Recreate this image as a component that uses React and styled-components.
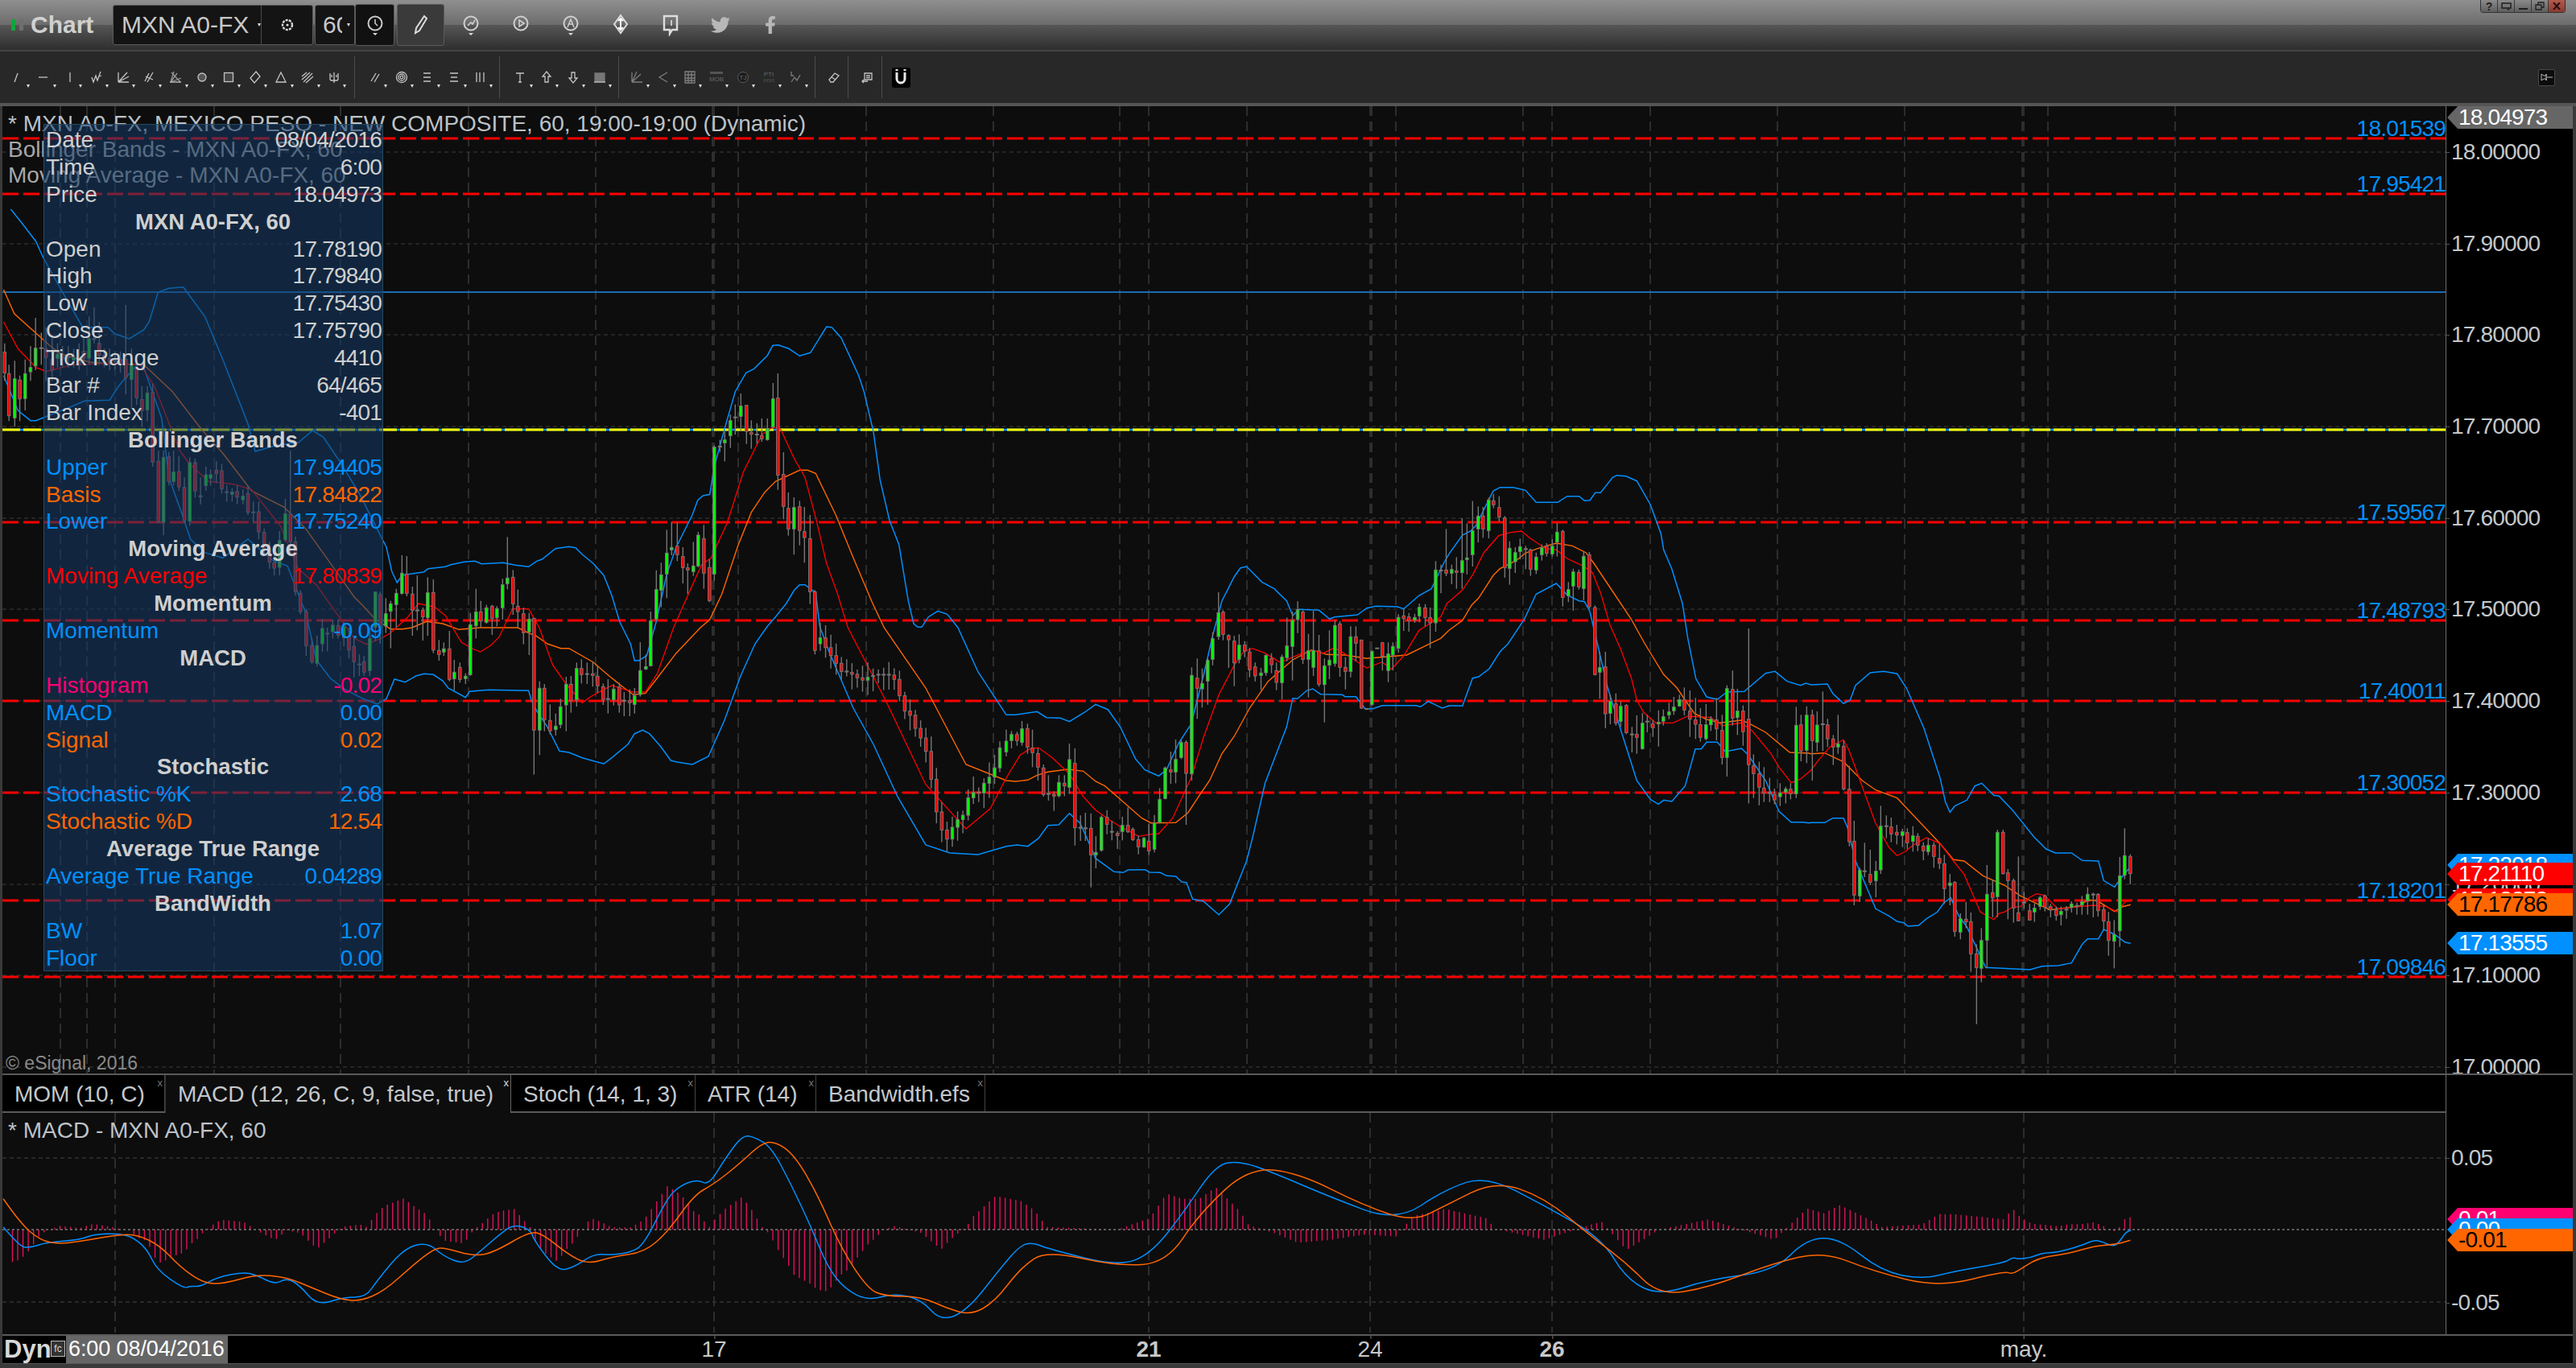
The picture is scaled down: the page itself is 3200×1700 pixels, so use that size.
import React from 'react';
import styled, { createGlobalStyle } from 'styled-components';
import { FaTwitter, FaFacebookF } from 'react-icons/fa';

const Global = createGlobalStyle`
  html, body { margin: 0; padding: 0; background: #3a3a3a; }
  body { width: 3200px; height: 1700px; overflow: hidden; font-family: "Liberation Sans", Arial, sans-serif; }
`;

/* ---------- coordinate helpers: transcribed points use crop coordinates ---------- */
const Z2 = [0, 260, 2.24, 3], Z3 = [0, 760, 2.24, 3], Z12 = [440, 640, 3, 3], Z8 = [800, 380, 3, 3],
  Z9 = [1250, 640, 2.613, 3], Z10 = [1800, 580, 3, 3], Z11 = [2250, 760, 3, 3], Z6 = [0, 1300, 1.206, 3],
  Z7 = [2500, 1300, 2.24, 3], ZO = [0, 0, 0.49, 0.49], ID = [0, 0, 1, 1];
const pts = ([ox, oy, sx, sy], a) => {
  const r = [];
  for (let i = 0; i < a.length; i += 2) r.push([ox + a[i] / sx, oy + a[i + 1] / sy]);
  return r;
};
const toPath = (p) => 'M' + p.map(([x, y]) => `${x.toFixed(1)} ${y.toFixed(1)}`).join('L');
const toSmooth = (p) => {
  let s = `M${p[0][0].toFixed(1)} ${p[0][1].toFixed(1)}`;
  for (let i = 1; i < p.length - 1; i++) {
    const mx = (p[i][0] + p[i + 1][0]) / 2, my = (p[i][1] + p[i + 1][1]) / 2;
    s += `Q${p[i][0].toFixed(1)} ${p[i][1].toFixed(1)} ${mx.toFixed(1)} ${my.toFixed(1)}`;
  }
  const l = p[p.length - 1];
  return `${s}L${l[0].toFixed(1)} ${l[1].toFixed(1)}`;
};
const interp = (p, x) => {
  if (x <= p[0][0]) return p[0][1];
  for (let i = 1; i < p.length; i++) {
    if (x <= p[i][0]) {
      const t = (x - p[i - 1][0]) / (p[i][0] - p[i - 1][0] || 1);
      return p[i - 1][1] + t * (p[i][1] - p[i - 1][1]);
    }
  }
  return p[p.length - 1][1];
};

/* ---------- indicator curves ---------- */
const upper = [
  ...pts(Z2, [30,0,60,50,100,120,120,180,170,300,230,440,300,440,320,465,360,483,400,450,415,420,440,310,470,295,510,290,570,400,620,560,690,800,710,903,770,880,830,870,870,825,900,850,950,950,1000,1060,1060,1220]),
  ...pts(Z12, [120,120,140,210,160,252,178,225,220,218,260,212,275,200,340,193,360,185,410,175,450,172,475,182,555,178,600,187,650,193,680,172,700,165,750,125,800,118,825,122,850,147,890,180,930,225,960,300,990,400,1030,480,1045,543,1060,543,1090,525,1125,400,1165,220]),
  ...pts(Z8, [120,900,180,780,200,725,220,708,245,703,262,600,300,460,340,320,380,250,410,235,460,185,480,148,500,146,540,160,580,187,620,175,680,78,700,80,735,120,800,260,820,320,855,470,880,650,915,800,950,890,985,1100,1005,1185,1020,1198,1035,1198,1060,1160,1095,1138,1130,1150,1170,1200]),
  ...pts(ID, [1215,835]),
  ...pts(Z9, [0,745,30,745,100,733,130,755,175,757,205,770,255,735,290,706,330,725,370,790,420,910,450,950,495,973,520,950,560,850,600,780,640,600,670,450,700,320,740,230,760,197,780,192,830,250,870,275,910,320,930,375,950,352,1015,355,1050,388,1065,380,1140,372,1170,347,1200,340,1270,342,1290,350,1340,300,1380,275,1420,180]),
  ...pts(Z10, [0,325,50,255,80,240,100,220,165,90,190,77,240,77,285,88,325,133,405,133,440,110,485,110,505,127,525,125,545,97,565,97,610,40,625,32,660,35,700,53,750,140,790,250,800,310,830,380,870,510,890,640,920,790,960,858,1000,868,1035,840,1100,838,1180,770,1215,763,1260,800,1310,815,1330,807]),
  ...pts(Z11, [0,273,60,270,80,305,120,343,145,330,165,275,220,228,270,223,320,232,355,285,420,435,480,620,500,710,517,748,535,725,580,703,610,650,635,640,680,685,700,688,750,740,830,840,875,885,910,900,970,900,1010,928,1070,930,1090,1003,1130,1027,1150,1000,1190,950]),
];
const lower = [
  ...pts(Z2, [10,620,50,750,85,788,100,788,125,775,200,735,235,715,305,712,330,660,345,635,385,575,400,590,450,780,470,1000,510,1150,530,1230,570,1280,620,1300,690,1230,760,1310,800,1330,840,1470]),
  ...pts(Z3, [850,0,880,180,920,250,960,290,1010,325,1050,345]),
  ...pts(Z12, [120,685,150,612,190,623,230,600,260,592,295,595,330,618,350,645,415,680,430,658,500,652,650,655,660,690,680,730,720,790,765,880,800,885,850,905,930,928,960,905,1020,855,1045,815,1075,802,1100,815,1140,860,1180,915,1200,920]),
  ...pts(ID, [860,950,880,940,900,895,920,840,938,800]),
  ...pts(Z8, [460,1195,490,1160,530,1110,560,1060,580,1040,600,1040,640,1070,655,1195]),
  ...pts(ID, [1030,810,1060,880,1085,925,1115,990,1150,1050,1180,1060,1215,1062]),
  ...pts(Z9, [0,1235,35,1230,70,1235,105,1205,135,1157,170,1155,205,1112,240,1150,260,1200,290,1280,350,1330,380,1333,395,1323,450,1322,465,1332,500,1333,520,1345,550,1347,570,1368,585,1370,605,1432,640,1440,690,1490,725,1450,780,1290,800,1200,840,1000,880,880,910,790,930,683,945,685,975,655,995,648,1020,668,1090,670,1100,677,1135,677,1165,722,1190,722,1220,710,1330,710,1345,715,1370,695,1415,720,1440,710]),
  ...pts(Z10, [0,890,50,892,88,788,110,783,150,753,190,690,220,660,280,570,325,475,400,435,440,478,485,500,505,503,525,540,560,690,590,820,640,980,700,1170,750,1240,780,1258,800,1243,830,1248,880,1190,918,1052,940,1052,960,1027,1000,1027,1030,1062,1090,1050,1115,1075,1180,1170,1230,1285,1275,1325,1320,1325,1340,1328]),
  ...pts(Z11, [0,787,50,787,80,770,120,770,135,805,165,930,240,1108,290,1135,320,1155,345,1160,360,1173,400,1170,430,1145,470,1120,495,1085,520,1067,550,1135,580,1175,650,1327,815,1335,860,1322,920,1320,970,1310,1010,1240,1030,1220,1070,1220,1090,1185,1130,1203,1170,1233,1190,1237]),
];
const basis = [
  ...pts(Z2, [10,300,40,390,90,450,140,510,170,540,250,570,300,575,400,580,480,680,560,820,620,910,700,1050,790,1110,850,1190,930,1340]),
  ...pts(Z12, [0,305,30,335,75,385,135,425,180,425,215,420,270,397,330,405,390,427,470,420,610,420,650,440,680,452,720,480,770,497,800,497,890,548,950,600,1000,640,1040,670,1085,665,1120,620,1200,515]),
  ...pts(Z8, [210,1200,245,1170,290,1075,350,895,400,770,450,695,490,655,580,613,610,613,640,625,715,780,780,940,850,1105,895,1200]),
  ...pts(ID, [1150,855,1200,950]),
  ...pts(Z9, [0,990,30,993,70,988,100,970,135,958,200,948,250,955,290,993,320,1010,370,1060,440,1130,470,1148,550,1147,590,1110,630,1040,660,990,700,890,740,825,790,720,850,620,890,580,930,540,990,503,1040,520,1100,522,1170,535,1300,522,1410,460]),
  ...pts(Z10, [0,610,50,573,85,515,110,490,165,405,190,380,250,350,285,322,330,305,400,285,460,295,510,320,540,360,620,480,680,570,730,660,800,775,850,825,880,870,915,920,960,942,1010,955,1090,945,1115,955,1180,990,1270,1065,1340,1068]),
  ...pts(Z11, [0,530,50,527,120,560,190,630,240,665,320,695,400,780,480,865,530,925,570,930,640,985,720,1020,780,1060,890,1112,1000,1098,1030,1075,1065,1078,1130,1118,1160,1100,1190,1093]),
];
const movAvg = [
  ...pts(Z2, [10,420,50,520,100,590,130,605,200,580,300,575,390,580,430,660,500,900,525,945,580,1015,650,1025,700,1045,780,1180,830,1340,880,1400]),
  ...pts(Z12, [0,460,45,482,100,460,135,440,200,380,240,330,300,343,340,375,400,475,440,498,470,510,510,485,540,455,590,350,650,350,690,420,740,560,790,630,850,700,880,678,960,635,1040,660,1085,660,1130,590]),
  ...pts(Z8, [110,1200,190,1020,215,965,250,940,310,810,370,620,420,520,440,480,480,452,510,462,560,570,600,640,640,790,680,960,720,1070,760,1200]),
  ...pts(ID, [1100,870,1150,975,1200,1030,1230,1005]),
  ...pts(Z9, [0,980,45,895,80,870,105,868,150,905,205,965,250,1050,290,1100,340,1140,375,1165,430,1198,470,1190,495,1188,540,1130,600,980,640,830,690,670,740,560,770,510,800,498,840,515,890,550,950,520,995,505,1030,515,1065,495,1110,525,1170,570,1220,548,1250,575,1290,525,1340,430,1410,380,1430,330]),
  ...pts(Z10, [0,503,50,460,90,400,130,320,185,257,230,245,270,240,300,265,360,305,400,310,440,342,500,370,535,395,565,470,600,590,640,680,680,790,700,870,725,915,770,955,835,955,890,930,975,935,1020,965,1090,955,1130,985,1200,1070,1230,1120,1275,1178,1310,1165]),
  ...pts(Z11, [0,590,30,550,70,505,120,478,140,515,200,680,240,790,290,880,320,910,350,895,380,870,430,843,480,865,530,930,570,980,600,1050,630,1120,680,1148,700,1125,720,1120,750,1102,780,1100,810,1068,840,1052,870,1058,900,1090,920,1108,1000,1100,1050,1095,1100,1100,1140,1120,1170,1082,1190,1078]),
];
const macdLine = [
  ...pts(Z6, [5,680,30,755,45,757,70,738,120,728,140,708,170,705,195,712,220,760,235,840,275,910,285,900,300,903,325,868,365,848,385,860,412,895,430,870,450,900,475,973,515,942,548,942,565,880,605,760,640,737,665,790,695,820,720,770,750,705,770,670,795,690,800,730,835,845,860,830,890,780,915,785,945,775,965,745,1000,570,1020,525,1045,503,1062,525,1085,430,1112,338,1130,345,1155,380,1185,520,1215,680,1240,830,1265,910,1300,955,1340,928,1380,950,1410,1033,1450,990,1500,830,1530,745,1550,740,1568,760]),
  ...pts(ZO, [680,772,700,765,720,740,740,710,755,708,775,715,810,730,850,745,880,725,905,717,940,735,975,755,990,780,1010,790,1040,780,1080,775,1100,755,1120,755,1145,775,1170,780,1190,775,1220,770]),
  ...pts(Z7, [0,793,15,800,50,795,80,778,125,775,190,750,225,730,245,733,280,753,295,740,315,700,330,692]),
];
const signalLine = [
  ...pts(Z6, [5,575,30,665,60,730,90,745,140,725,175,710,205,708,240,750,270,830,305,890,335,892,385,857,430,868,470,910,510,950,540,957,575,920,620,820,650,762,665,757,710,790,740,775,795,695,815,710,850,780,880,820,920,790,965,775,1000,700,1040,560,1070,520,1110,440,1140,370,1160,360,1190,410,1225,560,1260,760,1300,910,1325,938,1380,940,1420,985,1455,1008,1490,960,1530,830,1568,768]),
  ...pts(ZO, [680,772,710,770,730,740,760,712,790,715,830,735,860,745,880,735,910,720,940,730,970,755,990,770,1010,790,1040,785,1080,770,1110,763,1140,775,1180,785,1220,775]),
  ...pts(Z7, [0,857,30,830,75,795,160,778,230,750,290,745,328,730]),
];

/* ---------- candles: [x, bodyTop, bodyBottom, wickTop, wickBottom, kind] ---------- */
const cs = ([ox, oy, sx, sy], list) => list.map(([x, t, b, wt, wb, k]) => ({
  x: ox + x / sx, t: oy + t / sy, b: oy + b / sy, wt: oy + wt / sy, wb: oy + wb / sy, k,
}));
const g = 'g', r = 'r', d = 'd';
const seg2 = [[13,533,610,500,640,r],[25,613,770,580,790,r],[41,632,778,565,810,g],[55,637,707,620,790,r],[70,613,706,560,750,g],[85,590,606,510,640,g],[99,518,584,405,600,g],[115,518,518,460,580,d],[128,520,553,440,640,r],[145,560,600,470,640,r],[160,540,556,500,590,g],[174,550,558,510,590,r],[190,553,568,510,590,d],[205,553,563,520,590,g],[220,555,580,500,600,r],[233,530,555,480,580,r],[248,483,555,400,580,g],[262,484,484,365,500,d],[276,500,545,420,580,r],[290,545,560,520,590,r],[305,555,570,520,600,r],[320,565,565,530,600,d],[335,560,570,530,610,r],[350,560,628,357,690,r],[366,575,635,520,740,g],[380,590,703,560,730,r],[395,710,750,660,810,r],[410,685,748,660,790,g],[425,683,943,650,960,r],[441,940,1165,900,1170,r],[455,926,1167,900,1215,g],[470,923,1015,905,1030,r],[483,980,1015,900,1030,g],[498,978,1035,920,1050,r],[513,1037,1160,1000,1170,r],[528,945,1163,925,1180,g],[543,945,1050,930,1075,r],[558,1070,1070,1000,1100,d],[573,990,1030,960,1050,g],[586,990,1003,970,1030,g],[602,973,985,940,1020,r],[617,975,1042,950,1060,r],[631,1055,1055,1030,1090,d],[646,1055,1063,1040,1090,g],[660,1052,1073,1030,1100,r],[676,1070,1083,1045,1100,g],[690,1060,1130,1030,1140,r],[705,1130,1130,1090,1170,d],[720,1128,1203,1090,1230,r],[735,1205,1265,1190,1290,r],[750,1265,1315,1240,1340,r],[763,1318,1338,1290,1365,r],[778,1235,1335,1200,1365,g],[794,1135,1232,1080,1240,g],[808,1137,1240,900,1280,r],[822,1240,1425,1220,1440,r],[836,1432,1500,1420,1510,r]];
const seg3 = [[852,0,127,-10,165,r],[868,127,187,100,195,r],[882,127,193,90,205,g],[897,63,120,28,150,g],[911,82,82,60,148,d],[926,51,75,30,100,g],[941,52,88,30,100,r],[957,55,98,40,130,g],[971,92,143,60,175,r],[985,130,187,90,245,r],[1000,197,197,160,240,d],[1013,187,226,165,240,r],[1029,100,220,60,240,g]];
const seg12 = [[79,287,418,285,470,g],[97,296,420,285,480,r],[118,368,414,310,440,g],[136,331,359,320,497,g],[157,292,334,275,420,g],[178,217,292,150,297,g],[196,220,292,153,303,r],[217,295,355,267,450,r],[235,356,356,225,430,d],[256,355,380,345,468,r],[274,290,383,232,450,g],[295,289,503,240,515,r],[316,505,520,466,543,r],[334,499,511,475,525,g],[355,499,613,432,620,r],[373,586,611,540,655,g],[394,568,613,550,625,r],[415,601,610,590,630,g],[433,409,595,365,600,g],[454,361,413,275,460,g],[472,361,395,320,420,r],[493,346,400,335,405,g],[514,340,385,335,447,r],[532,349,383,340,415,g],[553,260,346,238,390,g],[571,235,256,82,277,g],[592,232,331,205,372,r],[610,340,360,278,420,r],[631,368,439,345,482,r],[652,388,436,365,522,g],[670,385,802,385,968,r],[691,646,802,620,895,g],[709,646,763,630,806,r],[730,766,805,706,818,r],[751,787,800,740,822,g],[769,715,781,685,795,g],[790,631,708,603,806,g],[808,631,691,600,737,r],[829,572,689,550,714,g],[847,572,595,538,628,r],[868,593,593,550,630,d],[889,592,597,548,640,r],[907,601,637,560,663,r],[928,640,688,628,708,r],[946,686,686,612,740,d],[967,649,689,630,710,g],[988,641,708,625,737,r],[1006,692,692,660,750,d],[1027,692,700,650,750,r],[1045,674,706,645,740,g],[1066,580,669,474,677,g],[1087,565,574,520,578,g],[1105,394,562,360,565,g],[1126,278,388,206,395,g],[1144,223,280,178,344,g],[1165,142,220,55,310,g],[1183,121,130,25,150,g]];
const seg8 = [[124,896,928,808,952,r],[145,935,976,900,1035,r],[163,977,985,960,1075,r],[184,970,991,880,1007,g],[202,855,970,843,975,g],[223,868,997,817,1055,r],[244,976,1099,945,1105,r],[262,527,1000,520,1025,g],[283,525,525,500,545,d],[301,500,511,470,580,g],[322,428,484,405,530,g],[340,416,416,368,480,d],[361,374,412,327,465,g],[382,371,468,370,515,r],[400,472,479,427,533,r],[421,480,480,438,515,d],[439,484,496,420,507,r],[460,458,499,420,503,g],[481,347,451,288,460,g],[499,344,631,252,686,r],[520,629,748,546,796,r],[538,755,832,696,857,r],[559,752,832,714,928,g],[580,749,838,727,893,r],[598,842,864,750,958,r],[619,868,1066,780,1112,r],[637,1066,1285,1060,1300,r]];
const seg9 = [[0,843,883,800,900,g],[17,818,841,805,870,g],[35,818,841,808,860,r],[51,797,848,768,860,g],[69,796,865,778,890,r],[85,869,886,800,940,r],[103,889,940,870,990,r],[121,943,1042,930,1050,r],[137,1040,1040,970,1065,d],[155,1042,1047,1030,1103,r],[171,997,1047,970,1052,g],[189,1000,1010,970,1048,r],[205,912,1015,852,1040,g],[223,926,1166,870,1232,r],[241,1166,1166,1120,1215,d],[257,1168,1168,1110,1215,d],[275,1168,1267,1112,1388,r],[291,1258,1267,1197,1317,g],[309,1127,1250,1120,1255,g],[327,1127,1153,1100,1190,r],[343,1181,1181,1140,1213,d],[361,1187,1195,1178,1245,r],[377,1157,1180,1125,1213,g],[395,1157,1181,1090,1185,r],[411,1172,1210,1165,1215,r],[429,1210,1237,1195,1265,r],[447,1205,1238,1200,1240,g],[463,1216,1252,1150,1268,r],[481,1148,1246,1118,1258,g],[498,1060,1146,1018,1150,g],[516,943,1057,938,1060,g],[534,950,958,882,1002,r],[550,911,958,837,1000,g],[568,848,904,838,910,g],[584,848,963,840,1155,r],[602,598,965,568,990,g],[620,608,646,535,760,r],[636,628,648,572,718,g],[654,542,619,535,707,g],[670,461,538,437,560,g],[689,364,453,288,465,g],[704,362,445,355,467,r],[722,449,465,445,570,r],[740,470,551,450,638,r],[756,485,538,445,553,g],[774,485,507,470,530,r],[790,511,577,495,605,r],[808,566,600,550,620,r],[827,589,598,570,652,g],[843,523,588,520,600,g],[861,535,558,515,590,r],[877,580,624,550,653,r],[895,530,625,520,687,g],[911,488,532,382,545,g],[929,392,490,360,617,g],[946,352,390,322,440,g],[963,362,538,355,555,r],[981,506,538,443,680,g],[997,505,568,357,600,g],[1015,506,631,447,640,r],[1033,562,632,535,773,g],[1049,541,560,430,612,g],[1067,412,553,393,565,g],[1083,406,568,395,603,r],[1101,568,583,530,650,r],[1118,454,583,415,605,g],[1135,454,478,415,545,r],[1153,466,720,465,722,r],[1170,723,723,720,726,d],[1187,508,707,505,710,g],[1204,497,497,495,499,d],[1221,476,526,473,580,r],[1240,518,580,475,623,g],[1255,490,522,475,580,g],[1273,382,497,370,513,g],[1290,376,386,348,432,r],[1307,380,395,365,435,r],[1326,382,392,368,402,g],[1341,344,376,330,400,g],[1360,346,382,332,415,r],[1376,382,402,345,497,r],[1394,205,402,172,435,g],[1411,207,207,185,292,d],[1428,205,217,52,228,r]];
const seg10 = [[10,383,397,365,438,g],[28,388,394,337,455,r],[49,350,395,192,455,g],[67,340,346,212,402,g],[88,238,328,128,372,g],[109,184,232,148,282,g],[127,184,232,150,265,r],[148,124,238,115,267,g],[166,127,142,102,155,r],[187,152,187,110,205,r],[208,191,376,184,414,r],[226,304,379,278,440,g],[247,320,354,300,396,g],[265,298,316,268,345,g],[286,307,307,295,382,d],[304,310,382,305,407,r],[325,337,385,320,400,g],[346,302,328,290,350,g],[364,296,323,285,335,r],[385,296,325,270,335,g],[403,244,281,210,335,g],[424,241,487,235,521,r],[445,458,481,430,505,g],[463,392,445,380,537,g],[484,394,448,383,458,r],[502,334,454,316,498,g],[523,328,522,318,530,r],[544,525,775,517,778,r],[562,749,766,690,865,g],[583,746,921,690,975,r],[601,875,919,850,960,g],[622,884,955,845,965,r],[640,893,949,875,970,g],[661,890,991,885,997,r],[682,998,998,970,1065,d],[700,998,1009,927,1070,r],[721,956,1051,918,1055,g],[739,950,950,925,990,d],[760,959,973,945,1007,r],[781,953,958,908,1043,g],[799,932,949,905,965,g],[820,914,925,880,941,g],[838,896,910,858,925,g],[859,869,892,850,895,g],[877,869,907,823,927,r],[898,911,941,834,1007,r],[919,944,960,862,1015,r],[937,962,1009,900,1025,r],[958,962,1014,885,1020,g],[976,941,962,930,985,g],[997,944,977,862,1020,r],[1018,983,1084,925,1110,r],[1036,827,1084,815,1155,g],[1057,830,937,760,965,r],[1075,911,935,828,1000,g],[1096,911,988,890,1040,r],[1117,941,1111,603,1255,r],[1135,1115,1144,1072,1235,r],[1156,1145,1195,1100,1262,r],[1174,1198,1216,1120,1250,r],[1195,1216,1216,1160,1250,d],[1213,1222,1242,1200,1258,r],[1234,1216,1230,1180,1265,g],[1255,1202,1213,1193,1255,g],[1273,1202,1219,1180,1240,r],[1294,964,1219,895,1235,g],[1312,962,1060,925,1098,r],[1333,926,1057,893,1105,g]];
const seg11 = [[4,386,481,366,630,r],[22,423,487,372,522,g],[43,420,420,298,520,d],[61,422,474,400,505,r],[82,475,505,460,572,r],[100,493,505,385,530,g],[121,502,661,480,667,r],[142,662,858,575,875,r],[160,856,1057,780,1095,r],[181,964,1060,955,1082,g],[199,968,968,862,990,d],[220,980,1009,888,1020,r],[241,968,1003,930,1065,g],[259,800,963,724,978,g],[280,800,800,760,845,d],[298,803,829,768,860,r],[319,823,833,795,868,r],[340,821,835,810,878,g],[358,824,862,808,885,r],[379,836,857,800,895,g],[397,838,871,826,893,r],[418,874,892,860,927,r],[436,871,895,845,908,g],[457,871,913,860,955,r],[478,920,938,865,960,r],[496,940,1033,907,1090,r],[517,1012,1021,978,1095,g],[535,1010,1192,1005,1212,r],[556,1145,1195,1125,1222,g],[577,1147,1157,1082,1180,r],[595,1156,1276,1122,1343,r],[616,1276,1327,1240,1538,r],[634,1226,1330,1180,1382,g],[655,1054,1225,945,1330,g],[676,1048,1067,1000,1140,r],[694,823,1063,813,1140,g],[715,823,977,813,980,r],[733,974,1003,960,1147,r],[754,1003,1105,995,1160,r],[772,1123,1153,913,1155,r],[793,1085,1085,1045,1108,d],[814,1115,1150,1090,1152,r],[832,1106,1120,1088,1157,g],[853,1066,1099,1060,1112,g],[871,1060,1102,1055,1118,r],[892,1100,1112,1090,1140,r],[913,1112,1133,1100,1152,r],[931,1117,1130,1100,1170,g],[951,1111,1111,1098,1145,d],[970,1090,1103,1080,1122,g],[990,1097,1097,1085,1130,d],[1009,1081,1094,1060,1130,g],[1030,1054,1078,1028,1130,g],[1051,1055,1055,1048,1140,d],[1069,1054,1115,1050,1137,r],[1090,1111,1154,1095,1190,r],[1108,1156,1226,1120,1283,r],[1129,1204,1229,1150,1330,g],[1150,985,1190,915,1250,g],[1168,910,983,808,998,g],[1189,913,977,905,1017,r]];

/* the stretch between 1018 and 1246 is generated along a close path */
const closePath = pts(ID, [1012,790,1030,815,1045,830,1065,838,1085,842,1105,838,1120,870,1135,900,1150,935,1160,990,1172,1040,1185,1030,1200,1000,1215,985,1232,955,1248,925]);
const synthetic = (() => {
  const out = [];
  let seed = 7;
  const rnd = () => { seed = (seed * 16807) % 2147483647; return seed / 2147483647; };
  let prev = 800;
  for (let x = 1019; x < 1246; x += 6.56) {
    const c = interp(closePath, x) + (rnd() - 0.5) * 14;
    const t = Math.min(prev, c), b = Math.max(prev, c);
    const wt = t - 4 - rnd() * 16, wb = b + 4 + rnd() * 16;
    const k = Math.abs(prev - c) < 2 ? d : c < prev ? g : r;
    out.push({ x, t, b, wt, wb, k });
    prev = c;
  }
  return out;
})();
const candles = [
  ...cs(Z2, seg2), ...cs(Z3, seg3), ...cs(Z12, seg12), ...cs(Z8, seg8), ...synthetic,
  ...cs(Z9, seg9), ...cs(Z10, seg10), ...cs(Z11, seg11),
];

/* ---------- chart constants ---------- */
const LEVELS = [
  [172, '18.01539'], [241, '17.95421'], [649, '17.59567'], [771, '17.48793'],
  [871, '17.40011'], [985, '17.30052'], [1119, '17.18201'], [1214, '17.09846'],
];
const PRICE_TICKS = [[189,'18.00000'],[303,'17.90000'],[416,'17.80000'],[530,'17.70000'],[644,'17.60000'],[757,'17.50000'],[871,'17.40000'],[985,'17.30000'],[1099,'17.20000'],[1212,'17.10000'],[1326,'17.00000']];
const VERTICALS = [75,108,143,266,423,582,740,885,887,917,1076,1234,1391,1427,1549,1702,1704,1734,1892,1928,2050,2208,2366,2512,2514,2544,2702];
const MACD_VERTICALS = [143, 887, 1427, 1702, 1928, 2514];

const Page = styled.div`
  width: 3200px; height: 1700px; display: flex; flex-direction: column;
  background: #3a3a3a; color: #c8c8c8; overflow: hidden; font-size: 28px;
`;
const TitleBar = styled.header`
  height: 64px; flex: none; display: flex; align-items: center; box-sizing: border-box;
  background: linear-gradient(#8f8f8f 0, #6c6c6c 50%, #565656 50%, #2e2e2e 100%);
  border-bottom: 2px solid #444;
`;
const Led = styled.span`
  width: 5px; height: 14px; margin-right: ${(p) => p.$mr}px; border-radius: 1px;
  background: ${(p) => p.$c}; margin-left: ${(p) => p.$ml}px;
`;
const AppName = styled.span`
  font-weight: 700; font-size: 30px; color: #d0d0d0; width: 102px;
`;
const InputBox = styled.div`
  width: ${(p) => p.$w}px; height: 50px; box-sizing: border-box; display: flex; align-items: center;
  background: #141414; border: 1px solid #5a5a5a; border-radius: 3px; margin-right: ${(p) => p.$mr || 0}px;
  font-size: 30px; color: #c8c8c8; overflow: hidden; flex: none; position: relative;
`;
const SymbolText = styled.span`
  width: 179px; padding-left: 10px; box-sizing: border-box; white-space: nowrap;
`;
const GearCell = styled.span`
  flex: 1; align-self: stretch; border-left: 1px solid #4a4a4a; display: flex; align-items: center; justify-content: center;
`;
const IntervalText = styled.span`
  padding-left: 9px; width: 24px; overflow: hidden; white-space: nowrap; margin-right: 6px;
`;
const Caret = styled.i`
  width: 0; height: 0; border-left: 2.5px solid transparent; border-right: 2.5px solid transparent;
  border-top: 4px solid #e0e0e0; display: inline-block; flex: none;
`;
const SquareBtn = styled.div`
  width: ${(p) => p.$w}px; height: 52px; box-sizing: border-box; display: flex; align-items: center; justify-content: center;
  background: ${(p) => p.$bg}; border: 1px solid #5a5a5a; border-radius: 3px; margin-right: ${(p) => p.$mr || 0}px; flex: none;
`;
const HeadIcon = styled.div`
  width: 62px; display: flex; justify-content: center; align-items: center; flex: none; color: #cfcfcf;
`;
const WindowButtons = styled.div`
  margin-left: auto; margin-right: 13px; align-self: flex-start; display: flex; height: 15px;
  border: 1px solid #333; border-top: 0; border-radius: 0 0 4px 4px; overflow: hidden;
`;
const WinBtn = styled.div`
  width: 20px; display: flex; align-items: center; justify-content: center;
  background: ${(p) => (p.$close ? 'linear-gradient(#b55a4e,#8a3a30)' : 'linear-gradient(#8a8a8a,#5e5e5e)')};
  border-left: ${(p) => (p.$first ? 0 : '1px solid #3a3a3a')}; color: #1e1e1e; font-size: 14px; font-weight: 700; line-height: 1;
`;
const ToolBar = styled.div`
  height: 64px; flex: none; display: flex; align-items: center; background: #282828; padding-left: 5px; position: relative;
  border-bottom: 4px solid #555;
`;
const Tool = styled.div`
  width: 32.8px; height: 24px; flex: none; display: flex; align-items: center; justify-content: center; position: relative; color: #c4c4c4;
  & > svg { opacity: ${(p) => (p.$dim ? 0.55 : 1)}; }
  & > i { position: absolute; right: 1px; bottom: -1px; }
`;
const Sep = styled.span`
  width: 1px; height: 52px; background: #4c4c4c; margin: 0 ${(p) => p.$mr}px 0 ${(p) => p.$ml}px; flex: none;
`;
const Magnet = styled.div`
  width: 23px; height: 25px; flex: none; background: #000; border-radius: 3px; margin-left: 12px; display: flex; align-items: center; justify-content: center;
`;
const PinBox = styled.div`
  margin-left: auto; margin-right: 26px; width: 19px; height: 19px; background: #0c0c0c; border: 1px solid #4a4a4a; border-radius: 2px;
  display: flex; align-items: center; justify-content: center;
`;
const Row = styled.div`
  display: flex; flex: none; height: ${(p) => p.$h}px; padding-left: 3px; padding-right: 4px; background: #3a3a3a;
`;
const Pane = styled.div`
  width: 3035px; flex: none; position: relative; background: #0d0d0d; overflow: hidden;
  & > svg { display: block; }
`;
const Axis = styled.div`
  flex: 1; position: relative; background: #000; border-left: 1px solid #6a6a6a; overflow: hidden; color: #c4c8cc; letter-spacing: -0.8px;
  border-top: ${(p) => (p.$topLine ? '2px solid #5a5a5a' : 0)};
`;
const AxisLabel = styled.span`
  position: absolute; left: 6px; top: ${(p) => p.$top}px; line-height: 28px; white-space: nowrap;
  &::before { content: ''; position: absolute; left: -6px; top: 14px; width: 4px; height: 1px; background: #555; }
`;
const Tag = styled.div`
  position: absolute; left: 1px; right: 0; top: ${(p) => p.$top}px; height: 28px; line-height: 28px; padding-left: 14px;
  background: ${(p) => p.$bg}; color: ${(p) => p.$fg || '#fff'};
  clip-path: polygon(0 50%, 13px 0, 100% 0, 100% 100%, 13px 100%);
`;
const Caption = styled.div`
  position: absolute; left: ${(p) => p.$left ?? 7}px; top: ${(p) => p.$top}px; line-height: 28px; color: ${(p) => p.$c || '#bcc2c8'}; white-space: nowrap;
  font-size: ${(p) => p.$size || 28}px;
`;
const LevelLabel = styled.span`
  position: absolute; right: 0; top: ${(p) => p.$top}px; line-height: 28px; color: #0090ff; letter-spacing: -0.8px;
`;
const LegendPanel = styled.aside`
  position: absolute; left: 51px; top: 22px; width: 422px; height: 1053px; box-sizing: border-box;
  background: rgba(22, 58, 102, 0.56); border: 1px solid #254a62; padding-top: 2px;
  display: flex; flex-direction: column;
`;
const LegendRow = styled.div`
  height: 33.9px; line-height: 33.9px; flex: none; display: flex; justify-content: space-between; padding: 0 1px 0 2px;
  color: ${(p) => p.$c || '#cfcfcf'}; white-space: nowrap;
`;
const LegendValue = styled.span`
  letter-spacing: -0.8px;
`;
const LegendTitle = styled.div`
  height: 33.9px; line-height: 33.9px; flex: none; text-align: center; font-weight: 700; font-size: 27.5px; color: #cfcfcf; white-space: nowrap; padding-right: 1px;
`;
const TabStrip = styled.div`
  flex: none; width: 3035px; height: 49px; display: flex; background: #000; border-top: 2px solid #5a5a5a; box-sizing: border-box; border-bottom: 2px solid #5a5a5a;
`;
const Tab = styled.div`
  position: relative; width: ${(p) => p.$w}px; box-sizing: border-box; line-height: 47px; padding-left: 15px; white-space: nowrap; flex: none;
  color: #c4c8cc; background: ${(p) => (p.$active ? '#0d0d0d' : '#000')}; border-right: 1px solid #444;
  ${(p) => p.$active && 'height: 47px; margin-bottom: -2px; border-right-color: #666; border-left: 1px solid #333;'}
  &::after { content: 'x'; position: absolute; right: 2px; top: 3px; font-size: 13px; line-height: 13px; color: ${(p) => (p.$active ? '#ddd' : '#777')}; }
`;
const TimeBar = styled.div`
  flex: none; height: 37px; margin: 0 4px 0 3px; position: relative; background: #000; display: flex; align-items: stretch; color: #c8c8c8;
  border-top: 2px solid #5a5a5a; border-bottom: 1px solid #555; box-sizing: border-box;
`;
const Dyn = styled.span`
  font-weight: 700; font-size: 31px; line-height: 33px; margin-left: 2px; color: #d8d8d8; width: 59px; flex: none;
`;
const LockIcon = styled.span`
  width: 18px; height: 20px; border: 1px solid #bbb; margin: 6px 1px 0 -1px; background: #333; font-size: 12px; line-height: 18px; text-align: center; color: #ddd; box-sizing: border-box; flex: none;
`;
const DateChip = styled.span`
  background: #666; color: #fff; width: 201px; box-sizing: border-box; padding-left: 3px; line-height: 33px; font-size: 27px; white-space: nowrap; letter-spacing: -0.1px;
`;
const TimeTick = styled.span`
  position: absolute; left: ${(p) => p.$x}px; top: 0; line-height: 33px; transform: translateX(-50%); font-weight: ${(p) => (p.$bold ? 700 : 400)}; white-space: nowrap;
  &::before { content: ''; position: absolute; left: 50%; top: 0; width: 1px; height: 4px; background: #777; }
`;

/* ---------- small drawn icons ---------- */
const S = ({ w = 16, h = 16, children, vb }) => (
  <svg width={w} height={h} viewBox={vb || `0 0 ${w} ${h}`} fill="none" stroke="currentColor" strokeWidth="1.3">{children}</svg>
);
const toolIcons = [
  ['line', <S><path d="M5 14 9 3" /></S>],
  ['hline', <S><path d="M2 8h11" /></S>],
  ['vline', <S><path d="M8 2v12" /></S>],
  ['zig', <S><path d="M2 8l2 6 3-8 2 6 4-11" /><path d="M11 7l3-1" /></S>],
  ['fan', <S><path d="M2 14 13 2M2 14 15 7M2 14h13M2 14V2" /></S>],
  ['zag', <S><path d="M3 13 8 3M6 14 13 2M4 7l9 4" /></S>],
  ['gann', <S><path d="M2 14 6 1M2 14 10 3M2 14 15 9M3 2l11 12" opacity=".7" /><path d="M1 14h14" /></S>],
  ['circle', <S><circle cx="8" cy="8" r="5" fill="#555" /></S>],
  ['rect', <S><rect x="2.5" y="2.5" width="11" height="11" fill="#444" /></S>],
  ['diamond', <S><path d="M9 1l5 6-7 8-5-6z" /></S>],
  ['triangle', <S><path d="M8 2l6 12H2z" /></S>],
  ['channel', <S><path d="M1 11 11 2M3 14 14 3M6 15 15 7M1 7l6-5" /></S>],
  ['fork', <S><path d="M3 3v7q0 2 2 2h6q2 0 2-2V3M8 2v13M5 5v3M11 5v3" /></S>],
  [8.5, 8.5],
  ['dslash', <S><path d="M3 13 9 3M7 14 13 4" /></S>],
  ['rings', <S><circle cx="8" cy="8" r="6.5" /><circle cx="8" cy="8" r="4" /><circle cx="8" cy="8" r="1.8" /></S>],
  ['lines1', <S><path d="M3 3h9M3 8h9M3 13h9" /></S>],
  ['lines2', <S><path d="M3 3h10M4 8h8M3 13h10" /></S>],
  ['bars', <S><path d="M3 2v12M7 2v12M12 2v12" /></S>],
  [7, 8.5],
  ['T', <S><path d="M3 3h10M8 3v11M6 14h4" /></S>],
  ['up', <S><path d="M8 1l5 6h-3v7H6V7H3z" /></S>],
  ['down', <S><path d="M6 2h4v7h3l-5 6-5-6h3z" /></S>],
  ['note', <S><path d="M2 3h12v10H2z" fill="#777" stroke="#777" /><path d="M1 14h14" stroke="#ccc" /></S>],
  [6.5, 6.5],
  ['dfan', <S><path d="M2 14 8 1M2 14 13 4M2 14h13M2 14V2" /></S>, 1],
  ['arrows', <S><path d="M13 2 3 8l10 6" /></S>, 1],
  ['grid', <S><path d="M2 1h12v14H2zM2 5h12M2 9h12M2 12h12M6 1v14M10 1v14" /></S>, 1],
  ['mob', <svg width="20" height="16" viewBox="0 0 20 16"><rect x="2" y="1" width="16" height="3" fill="#777" /><text x="10" y="13" fontSize="8" fontFamily="Liberation Sans" fill="#999" textAnchor="middle">MOB</text></svg>, 1],
  ['tt', <svg width="16" height="16" viewBox="0 0 16 16"><circle cx="8" cy="8" r="6.5" fill="#111" stroke="#888" /><text x="8" y="11" fontSize="8" fontFamily="Liberation Sans" fill="#aaa" textAnchor="middle">TJ</text></svg>, 1],
  ['pti', <svg width="20" height="16" viewBox="0 0 20 16"><text x="10" y="7" fontSize="8" fontFamily="Liberation Sans" fill="#999" textAnchor="middle">PTI</text><text x="10" y="14" fontSize="7" fontFamily="Liberation Sans" fill="#777" textAnchor="middle">xxxx</text></svg>, 1],
  ['lz', <S><path d="M3 1v5h3M3 14l4-6 3 4 4-7" /></S>, 1],
  [7, 7],
  ['eraser', <S><path d="M2 11l7-8 5 3-7 8H4z" /><path d="M5 8l5 3" /></S>, 0, 1],
  [0.5, 6.5],
  ['memo', <S><path d="M5 3h9v8H5zM7 6h5M7 8.5h5M2 13h7M4 11l-2 2 2 2" /></S>, 0, 1],
  [1.5, 0],
];

const RingIcon = ({ children, caret = true }) => (
  <svg width="22" height="28" viewBox="0 0 22 28" fill="none" stroke="currentColor" strokeWidth="2">
    <circle cx="11" cy="12" r="8.5" />
    {children}
    {caret && <path d="M8 24h6l-3 3z" fill="#ddd" stroke="none" />}
  </svg>
);

const Bars = () => {
  const out = [];
  candles.forEach((c, i) => {
    const w = 3.5;
    out.push(<line key={`w${i}`} x1={c.x} x2={c.x} y1={c.wt} y2={c.wb} stroke="#777" strokeWidth="1.4" />);
    if (c.k === d) {
      out.push(<rect key={`b${i}`} x={c.x - 2.5} y={c.t - 1} width="5" height="2" fill="#777" />);
    } else {
      out.push(<rect key={`b${i}`} x={c.x - w / 2} y={c.t} width={w} height={Math.max(c.b - c.t, 2)} fill={c.k === g ? '#00ff00' : '#ff0000'} stroke="#777" strokeWidth="1" />);
    }
  });
  return out;
};

const PriceChart = () => (
  <svg width="3035" height="1202" viewBox="3 132 3035 1202">
    {PRICE_TICKS.map(([y]) => <line key={y} x1="3" x2="3038" y1={y} y2={y} stroke="#2c2c2c" strokeWidth="1.5" strokeDasharray="5 4" />)}
    {VERTICALS.map((x) => <line key={x} x1={x} x2={x} y1="132" y2="1334" stroke="#383838" strokeWidth="1.5" strokeDasharray="12 7" />)}
    <line x1="3" x2="3038" y1="363" y2="363" stroke="#1a6cb4" strokeWidth="2" />
    <line x1="3" x2="3038" y1="534" y2="534" stroke="#0090ff" strokeWidth="2.5" />
    <line x1="3" x2="3038" y1="534" y2="534" stroke="#ffff00" strokeWidth="3" strokeDasharray="22 4" />
    {LEVELS.map(([y]) => <line key={y} x1="3" x2="3038" y1={y} y2={y} stroke="#ff0000" strokeWidth="3" strokeDasharray="20 6" />)}
    <path d={toPath(upper)} fill="none" stroke="#0090ff" strokeWidth="1.5" />
    <path d={toPath(lower)} fill="none" stroke="#0090ff" strokeWidth="1.5" />
    <path d={toPath(basis)} fill="none" stroke="#ff6600" strokeWidth="1.4" />
    <path d={toPath(movAvg)} fill="none" stroke="#ff0000" strokeWidth="1.3" />
    <Bars />
  </svg>
);

const histBars = (() => {
  const out = [];
  for (let k = 0; k < 402; k++) {
    const x = 2646 - 6.56 * k;
    if (x < 5) break;
    const h = (interp(signalLine, x) - interp(macdLine, x)) * 1.25;
    out.push([x, 1530 - h]);
  }
  return out;
})();

const MacdChart = () => (
  <svg width="3035" height="273" viewBox="3 1385 3035 273">
    {[1441, 1620].map((y) => <line key={y} x1="3" x2="3038" y1={y} y2={y} stroke="#333" strokeWidth="1.5" strokeDasharray="5 4" />)}
    {MACD_VERTICALS.map((x) => <line key={x} x1={x} x2={x} y1="1385" y2="1660" stroke="#383838" strokeWidth="1.5" strokeDasharray="12 7" />)}
    {histBars.map(([x, y]) => <line key={x} x1={x} x2={x} y1="1530" y2={y} stroke="#e0105f" strokeWidth="1.4" />)}
    <line x1="3" x2="3038" y1="1530" y2="1530" stroke="#777" strokeWidth="1.5" strokeDasharray="3 3" />
    <path d={toSmooth(macdLine)} fill="none" stroke="#0090ff" strokeWidth="1.5" />
    <path d={toSmooth(signalLine)} fill="none" stroke="#ff6600" strokeWidth="1.5" />
  </svg>
);

const BLUE = '#0090ff', ORANGE = '#ff6600', RED = '#ff0000', PINK = '#ff0070';
const legend = [
  ['Date', '08/04/2016'], ['Time', '6:00'], ['Price', '18.04973'], ['MXN A0-FX, 60'],
  ['Open', '17.78190'], ['High', '17.79840'], ['Low', '17.75430'], ['Close', '17.75790'], ['Tick Range', '4410'], ['Bar #', '64/465'], ['Bar Index', '-401'],
  ['Bollinger Bands'], ['Upper', '17.94405', BLUE], ['Basis', '17.84822', ORANGE], ['Lower', '17.75240', BLUE],
  ['Moving Average'], ['Moving Average', '17.80839', RED], ['Momentum'], ['Momentum', '-0.09', BLUE],
  ['MACD'], ['Histogram', '-0.02', PINK], ['MACD', '0.00', BLUE], ['Signal', '0.02', ORANGE],
  ['Stochastic'], ['Stochastic %K', '2.68', BLUE], ['Stochastic %D', '12.54', ORANGE],
  ['Average True Range'], ['Average True Range', '0.04289', BLUE], ['BandWidth'], ['BW', '1.07', BLUE], ['Floor', '0.00', BLUE],
];

export default function App() {
  return (
    <Page>
      <Global />
      <TitleBar>
        <Led $c="#0fa63c" $ml={14} $mr={5} />
        <Led $c="#6e6e6e" $ml={0} $mr={9} />
        <AppName>Chart</AppName>
        <InputBox $w={249} $mr={2}>
          <SymbolText>MXN A0-FX</SymbolText>
          <Caret />
          <GearCell>
            <svg width="18" height="20" viewBox="0 0 18 20" fill="none" stroke="#ddd" strokeWidth="2.4"><circle cx="9" cy="10" r="6" strokeDasharray="3 1.2" /><circle cx="9" cy="10" r="1.6" fill="#ddd" stroke="none" /></svg>
          </GearCell>
        </InputBox>
        <InputBox $w={50}>
          <IntervalText>60</IntervalText>
          <Caret />
        </InputBox>
        <SquareBtn $w={49} $bg="#111" $mr={3}><RingIcon><path d="M11 7v5l3 3" strokeWidth="1.6" /></RingIcon></SquareBtn>
        <SquareBtn $w={59} $bg="#3a3a3a" $mr={2}>
          <svg width="18" height="26" viewBox="0 0 18 26" fill="none" stroke="#ddd" strokeWidth="2"><path d="M13 2l3 3-9 15-5 3 1-6z" /></svg>
        </SquareBtn>
        <HeadIcon><RingIcon><path d="M7 15l4-4 2 2 3-5" strokeWidth="1.6" /></RingIcon></HeadIcon>
        <HeadIcon><RingIcon caret={false}><path d="M9 8l6 4-6 4z" strokeWidth="1.6" /></RingIcon></HeadIcon>
        <HeadIcon><RingIcon><path d="M7 17l4-10 4 10M8.500 13h5" strokeWidth="1.5" /></RingIcon></HeadIcon>
        <HeadIcon>
          <svg width="22" height="28" viewBox="0 0 22 28" fill="none" stroke="#ddd" strokeWidth="2"><path d="M11 2l8 11-8 11-8-11z" /><path d="M11 6v14M8 9l3-3 3 3M8 17l3 3 3-3" stroke="#fff" /></svg>
        </HeadIcon>
        <HeadIcon>
          <svg width="22" height="28" viewBox="0 0 22 28" fill="none" stroke="#ddd" strokeWidth="2.4"><path d="M3 3h16v17h-6l-3 5v-5H3z" /><path d="M12 8v7" strokeWidth="1.6" /></svg>
        </HeadIcon>
        <HeadIcon><FaTwitter size={24} color="#b8b8b8" /></HeadIcon>
        <HeadIcon><FaFacebookF size={22} color="#b8b8b8" /></HeadIcon>
        <WindowButtons>
          <WinBtn $first>?</WinBtn>
          <WinBtn><svg width="13" height="10" viewBox="0 0 13 10" fill="none" stroke="#1e1e1e" strokeWidth="1.5"><path d="M1 1h11v6H1z" /><path d="M7 8h4l-2 2z" fill="#1e1e1e" stroke="none" /></svg></WinBtn>
          <WinBtn><svg width="11" height="10" viewBox="0 0 11 10"><path d="M0 7h11v2H0z" fill="#1e1e1e" /></svg></WinBtn>
          <WinBtn><svg width="12" height="11" viewBox="0 0 12 11" fill="none" stroke="#1e1e1e" strokeWidth="1.3"><path d="M1 4h7v6H1zM4 4V1h7v6H8" /></svg></WinBtn>
          <WinBtn $close><svg width="10" height="9" viewBox="0 0 10 9" stroke="#2a1410" strokeWidth="2.2"><path d="M1 0l8 9M9 0 1 9" /></svg></WinBtn>
        </WindowButtons>
      </TitleBar>
      <ToolBar>
        {toolIcons.map((t, i) => {
          if (typeof t[0] === 'number') return <Sep key={i} $ml={t[0]} $mr={t[1]} />;
          const [name, icon, dim, noCaret] = t;
          return <Tool key={name} $dim={dim}>{icon}{!noCaret && <Caret />}</Tool>;
        })}
        <Magnet>
          <svg width="16" height="20" viewBox="0 0 16 20" fill="none" stroke="#e8e8e8" strokeWidth="3"><path d="M3 4v8a5 5 0 0 0 10 0V4" /><path d="M1.500 1h3M11.500 1h3" strokeWidth="2" /></svg>
        </Magnet>
        <PinBox>
          <svg width="16" height="10" viewBox="0 0 16 10" fill="none" stroke="#bbb" strokeWidth="1"><path d="M1 1l3 2h3V1v8-2H4L1 9zM7 5h8" /></svg>
        </PinBox>
      </ToolBar>
      <Row $h={1202}>
        <Pane>
          <PriceChart />
          <Caption $top={8}>* MXN A0-FX, MEXICO PESO - NEW COMPOSITE, 60, 19:00-19:00 (Dynamic)</Caption>
          <Caption $top={40} $c="#a8a8a8">Bollinger Bands - MXN A0-FX, 60</Caption>
          <Caption $top={72} $c="#a8a8a8">Moving Average - MXN A0-FX, 60</Caption>
          <Caption $top={1175} $left={4} $size={23} $c="#8a8a8a">© eSignal, 2016</Caption>
          {LEVELS.map(([y, v]) => <LevelLabel key={y} $top={y - 132 - 26}>{v}</LevelLabel>)}
          <LegendPanel>
            {legend.map(([a, b, c], i) => (b
              ? <LegendRow key={i} $c={c}><span>{a}</span><LegendValue>{b}</LegendValue></LegendRow>
              : <LegendTitle key={i}>{a}</LegendTitle>))}
          </LegendPanel>
        </Pane>
        <Axis>
          {PRICE_TICKS.map(([y, v]) => <AxisLabel key={y} $top={y - 132 - 14}>{v}</AxisLabel>)}
          <Tag $top={0} $bg="#666">18.04973</Tag>
          <Tag $top={929} $bg="#0090ff">17.22018</Tag>
          <Tag $top={940} $bg="#ff0000">17.21110</Tag>
          <Tag $top={972} $bg="#ff0000">17.18272</Tag>
          <Tag $top={978} $bg="#ff6600" $fg="#000">17.17786</Tag>
          <Tag $top={1026} $bg="#0090ff">17.13555</Tag>
        </Axis>
      </Row>
      <Row $h={49}>
        <TabStrip>
          <Tab $w={202}>MOM (10, C)</Tab>
          <Tab $w={430} $active>MACD (12, 26, C, 9, false, true)</Tab>
          <Tab $w={229}>Stoch (14, 1, 3)</Tab>
          <Tab $w={150}>ATR (14)</Tab>
          <Tab $w={210}>Bandwidth.efs</Tab>
        </TabStrip>
        <Axis $topLine />
      </Row>
      <Row $h={275}>
        <Pane>
          <MacdChart />
          <Caption $top={8}>* MACD - MXN A0-FX, 60</Caption>
        </Pane>
        <Axis>
          <AxisLabel $top={42}>0.05</AxisLabel>
          <AxisLabel $top={222}>-0.05</AxisLabel>
          <Tag $top={118} $bg="#ff0070">0.01</Tag>
          <Tag $top={131} $bg="#0090ff">0.00</Tag>
          <Tag $top={144} $bg="#ff6600" $fg="#000">-0.01</Tag>
        </Axis>
      </Row>
      <TimeBar>
        <Dyn>Dyn</Dyn>
        <LockIcon>fc</LockIcon>
        <DateChip>6:00 08/04/2016</DateChip>
        <TimeTick $x={884}>17</TimeTick>
        <TimeTick $x={1424} $bold>21</TimeTick>
        <TimeTick $x={1699}>24</TimeTick>
        <TimeTick $x={1925} $bold>26</TimeTick>
        <TimeTick $x={2511}>may.</TimeTick>
      </TimeBar>
    </Page>
  );
}
